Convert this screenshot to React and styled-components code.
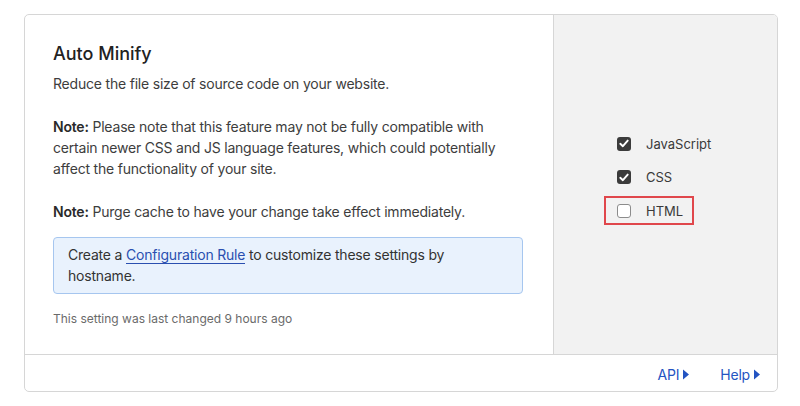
import React from "react";
import styled, { createGlobalStyle } from "styled-components";

const Global = createGlobalStyle`
  html, body { margin: 0; padding: 0; background: #ffffff; }
  body { font-family: Inter, "Open Sans", "Liberation Sans", sans-serif; color: #313131; }
  * { box-sizing: border-box; }
`;

const Page = styled.div`
  padding: 14px 22px 0 24px;
`;

const Card = styled.section`
  width: 754px;
  height: 378px;
  border: 1px solid #d6d6d6;
  border-radius: 5px;
  display: flex;
  flex-direction: column;
  overflow: hidden;
`;

const Body = styled.div`
  flex: 1;
  display: grid;
  grid-template-columns: 528px 1fr;
`;

const Main = styled.div`
  padding: 27px 28px 0 28px;
`;

const Title = styled.h2`
  margin: 0;
  font-size: 18px;
  line-height: 24px;
  font-weight: 500;
  color: #222;
`;

const Para = styled.p`
  margin: ${(p) => p.$top || 0}px 0 0;
  font-size: 14px;
  line-height: 21px;
  letter-spacing: -0.2px;
  color: #3d3d3d;
  b { font-weight: 600; color: #2a2a2a; }
`;

const Info = styled.div`
  margin-top: 15px;
  width: 470px;
  padding: 6px 14px 7px 14px;
  background: #e9f2fd;
  border: 1px solid #a6c6ef;
  border-radius: 4px;
  font-size: 14px;
  line-height: 21px;
  letter-spacing: -0.2px;
  color: #333;
`;

const InlineLink = styled.a`
  color: #2a4fb0;
  text-decoration: none;
  border-bottom: 1px solid #2a4fb0;
`;

const Meta = styled.div`
  margin-top: 16px;
  font-size: 12px;
  line-height: 18px;
  color: #6a6a6a;
`;

const Side = styled.div`
  background: #f2f2f2;
  border-left: 1px solid #d6d6d6;
  padding: 114px 0 0 50px;
  display: flex;
  flex-direction: column;
  gap: 4.5px;
`;

const Row = styled.label`
  display: flex;
  align-items: center;
  gap: 15px;
  width: 90px;
  height: 29px;
  padding-left: 13px;
  font-size: 13px;
  color: #3a3a3a;
  box-shadow: ${(p) => (p.$highlight ? "inset 0 0 0 2px #e0474c" : "none")};
`;

const Box = styled.span`
  width: 14px;
  height: 14px;
  border-radius: 3px;
  flex: none;
  display: flex;
  align-items: center;
  justify-content: center;
  background: ${(p) => (p.$checked ? "#3b3b3b" : "#ffffff")};
  border: ${(p) => (p.$checked ? "none" : "1px solid #8c8c8c")};
`;

const Footer = styled.footer`
  height: 37px;
  border-top: 1px solid #d6d6d6;
  display: flex;
  justify-content: flex-end;
  align-items: center;
  gap: 31px;
  padding: 3px 17px 0 0;
`;

const FooterLink = styled.a`
  color: #2454c2;
  font-size: 14px;
  letter-spacing: -0.2px;
  text-decoration: none;
  display: flex;
  align-items: center;
  gap: 4px;
`;

const Check = () => (
  <svg width="10" height="9" viewBox="0 0 10 9">
    <path d="M1.3 4.8 L3.9 7.2 L8.7 1.6" fill="none" stroke="#fff" strokeWidth="1.9" strokeLinecap="round" strokeLinejoin="round" />
  </svg>
);

const Caret = () => (
  <svg width="6" height="11" viewBox="0 0 6 11">
    <path d="M0 0.5 L6 5.5 L0 10.5 Z" fill="#2454c2" />
  </svg>
);

const items = [
  { label: "JavaScript", checked: true },
  { label: "CSS", checked: true },
  { label: "HTML", checked: false, highlight: true },
];

export default function App() {
  return (
    <Page>
      <Global />
      <Card>
        <Body>
          <Main>
            <Title>Auto Minify</Title>
            <Para $top={7}>Reduce the file size of source code on your website.</Para>
            <Para $top={22}>
              <b>Note:</b> Please note that this feature may not be fully compatible with
              certain newer CSS and JS language features, which could potentially
              affect the functionality of your site.
            </Para>
            <Para $top={22}>
              <b>Note:</b> Purge cache to have your change take effect immediately.
            </Para>
            <Info>
              Create a <InlineLink href="#">Configuration Rule</InlineLink> to customize these settings by hostname.
            </Info>
            <Meta>This setting was last changed 9 hours ago</Meta>
          </Main>
          <Side>
            {items.map((it) => (
              <Row key={it.label} $highlight={it.highlight}>
                <Box $checked={it.checked}>{it.checked && <Check />}</Box>
                {it.label}
              </Row>
            ))}
          </Side>
        </Body>
        <Footer>
          <FooterLink href="#">API <Caret /></FooterLink>
          <FooterLink href="#">Help <Caret /></FooterLink>
        </Footer>
      </Card>
    </Page>
  );
}
